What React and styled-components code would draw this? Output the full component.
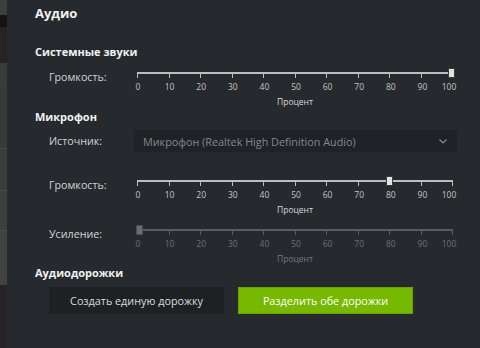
import React from "react";
import styled, { createGlobalStyle } from "styled-components";

const Global = createGlobalStyle`
  html, body { margin: 0; padding: 0; background: #262a2e; }
  body { font-family: "Open Sans", "Noto Sans", sans-serif; }
  * { box-sizing: border-box; }
`;

const Page = styled.div`
  display: flex;
  width: 480px;
  height: 348px;
  overflow: hidden;
`;

const Backdrop = styled.div`
  width: 7px;
  display: flex;
  flex-direction: column;
`;

const Band = styled.div`
  height: ${(p) => p.$h}px;
  background: ${(p) => p.$c};
  border-bottom: ${(p) => (p.$line ? "1px solid #4a4a4a" : "none")};
`;

const Panel = styled.div`
  flex: 1;
  background: #262a2e;
  padding: 0 0 0 28px;
  display: flex;
  flex-direction: column;
  color: #e8e8e8;
`;

const Title = styled.div`
  font-size: 13px;
  font-weight: 700;
  line-height: 26px;
  height: 26px;
  color: #f2f2f2;
`;

const SectionTitle = styled.div`
  font-size: 11px;
  font-weight: 700;
  line-height: 16px;
  height: 16px;
  margin-top: ${(p) => p.$mt}px;
  color: #f2f2f2;
`;

const Row = styled.div`
  display: flex;
  align-items: ${(p) => (p.$center ? "center" : "flex-start")};
  margin-top: ${(p) => p.$mt}px;
  padding-left: 14px;
`;

const Label = styled.div`
  width: 85px;
  font-size: 10.7px;
  line-height: 14px;
  color: #d4d4d4;
  margin-top: ${(p) => p.$mt || 0}px;
`;

const Select = styled.div`
  width: 323px;
  height: 22px;
  background: #1f2226;
  display: flex;
  align-items: center;
  justify-content: space-between;
  padding: 0 10px 0 9px;
  font-size: 10.8px;
  color: #85888b;
`;

const SliderWrap = styled.div`
  width: 323px;
  padding: 0 4px 0 3px;
  display: flex;
  flex-direction: column;
`;

const TrackArea = styled.div`
  position: relative;
  height: 10px;
`;

const Track = styled.div`
  position: absolute;
  left: 0;
  right: 0;
  top: 4px;
  height: 2px;
  background: ${(p) => (p.$disabled ? "#585c60" : "#bdbdbd")};
`;

const Ticks = styled.div`
  position: absolute;
  left: 0;
  right: 0;
  top: 5px;
  height: 5px;
  display: flex;
  justify-content: space-between;
`;

const Tick = styled.div`
  width: 1px;
  height: 5px;
  background: ${(p) => (p.$disabled ? "#585c60" : "#bdbdbd")};
`;

const Thumb = styled.div`
  position: absolute;
  top: 0;
  width: 7px;
  height: 10px;
  background: ${(p) => (p.$disabled ? "#6b6f73" : "#e2e2e2")};
  border: 1px solid ${(p) => (p.$disabled ? "#4a4e52" : "#3a3a3a")};
  border-radius: 1px;
`;

const TickLabels = styled.div`
  position: relative;
  height: 10px;
  margin-top: 4px;
`;

const TickLabel = styled.span`
  position: absolute;
  top: 0;
  transform: translateX(-50%);
  font-size: 8.5px;
  line-height: 10px;
  color: ${(p) => (p.$disabled ? "#6c7074" : "#c4c4c4")};
`;

const Unit = styled.div`
  margin-top: 4px;
  height: 12px;
  line-height: 12px;
  font-size: 8.5px;
  text-align: center;
  color: ${(p) => (p.$disabled ? "#75797d" : "#d8d8d8")};
`;

const Buttons = styled.div`
  display: flex;
  gap: 14px;
  margin-top: 6px;
  padding-left: 14px;
`;

const Button = styled.div`
  width: 175px;
  height: 27px;
  display: flex;
  align-items: center;
  justify-content: center;
  font-size: 10.8px;
  color: ${(p) => (p.$primary ? "#ffffff" : "#dcdcdc")};
  background: ${(p) => (p.$primary ? "#76b900" : "#1e2124")};
  border: 1px solid ${(p) => (p.$primary ? "#6aa400" : "#1e2124")};
`;

const TRACK_W = 316;
const ticks = [0, 10, 20, 30, 40, 50, 60, 70, 80, 90, 100];

function Slider({ value, disabled }) {
  let x = (value / 100) * TRACK_W - 3.5;
  x = Math.max(-1, Math.min(TRACK_W - 5, x));
  return (
    <SliderWrap>
      <TrackArea>
        <Track $disabled={disabled} />
        <Ticks>
          {ticks.map((t) => (
            <Tick key={t} $disabled={disabled} />
          ))}
        </Ticks>
        <Thumb $disabled={disabled} style={{ left: x }} />
      </TrackArea>
      <TickLabels>
        {ticks.map((t) => (
          <TickLabel
            key={t}
            $disabled={disabled}
            style={{ left: (t / 100) * TRACK_W + (t === 100 ? -4 : 1) }}
          >
            {t}
          </TickLabel>
        ))}
      </TickLabels>
      <Unit $disabled={disabled}>Процент</Unit>
    </SliderWrap>
  );
}

export default function App() {
  return (
    <>
      <Global />
      <Page>
        <Backdrop>
          <Band $h={15} $c="#3f3f3f" />
          <Band $h={12} $c="#141414" />
          <Band $h={36} $c="#2a2222" />
          <Band $h={22} $c="#3b3b3b" />
          <Band $h={64} $c="#393939" $line />
          <Band $h={42} $c="#3c3c3c" $line />
          <Band $h={40} $c="#3e3e3e" $line />
          <Band $h={54} $c="#434343" />
          <Band $h={63} $c="#2b2128" />
        </Backdrop>
        <Panel>
          <Title>Аудио</Title>
          <SectionTitle $mt={18}>Системные звуки</SectionTitle>
          <Row $mt={8}>
            <Label $mt={2}>Громкость:</Label>
            <Slider value={100} />
          </Row>
          <SectionTitle $mt={1}>Микрофон</SectionTitle>
          <Row $mt={5} $center>
            <Label>Источник:</Label>
            <Select>
              <span>Микрофон (Realtek High Definition Audio)</span>
              <svg width="8" height="5" viewBox="0 0 8 5">
                <polyline
                  points="0.5,0.5 4,4 7.5,0.5"
                  fill="none"
                  stroke="#8a8d90"
                  strokeWidth="1.2"
                />
              </svg>
            </Select>
          </Row>
          <Row $mt={24}>
            <Label $mt={2}>Громкость:</Label>
            <Slider value={80} />
          </Row>
          <Row $mt={9}>
            <Label $mt={2}>Усиление:</Label>
            <Slider value={0} disabled />
          </Row>
          <SectionTitle $mt={0}>Аудиодорожки</SectionTitle>
          <Buttons>
            <Button>Создать единую дорожку</Button>
            <Button $primary>Разделить обе дорожки</Button>
          </Buttons>
        </Panel>
      </Page>
    </>
  );
}
